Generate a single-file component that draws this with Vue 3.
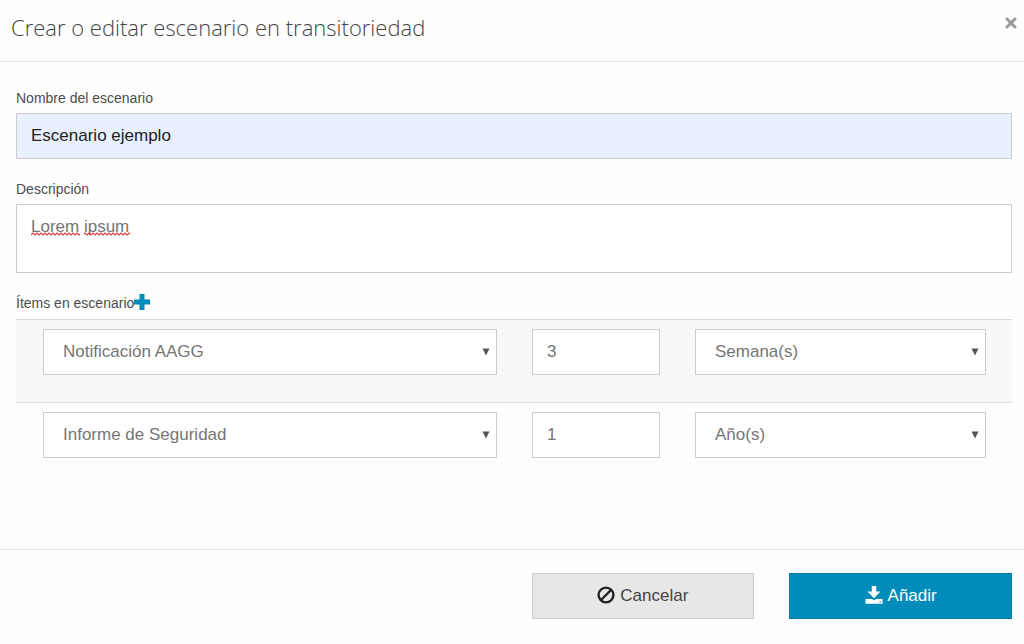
<template>
  <form class="modal" @submit.prevent>
    <header class="modal-header">
      <h1 class="modal-title">Crear o editar escenario en transitoriedad</h1>
      <button type="button" class="close" aria-label="Cerrar">
        <svg width="12" height="12" viewBox="0 0 12 12">
          <path d="M2 2L10 10M10 2L2 10" stroke="#999" stroke-width="3" stroke-linecap="round" />
        </svg>
      </button>
    </header>

    <div class="modal-body">
      <label class="label" for="nombre">Nombre del escenario</label>
      <input id="nombre" v-model="nombre" type="text" class="control control-filled" />

      <label class="label" for="descripcion">Descripción</label>
      <div class="textarea-wrap">
        <textarea id="descripcion" v-model="descripcion" class="control control-area" spellcheck="false"></textarea>
        <!-- subrayado del corrector -->
        <svg class="squiggle" width="101" height="4" viewBox="0 0 101 4">
          <defs>
            <pattern id="wave" width="4" height="4" patternUnits="userSpaceOnUse">
              <path d="M-1 2L0 3L2 1L4 3L5 2" fill="none" stroke="#e0383c" stroke-width="1.2" />
            </pattern>
          </defs>
          <rect width="49" height="4" fill="url(#wave)" />
          <rect x="53" width="46" height="4" fill="url(#wave)" />
        </svg>
      </div>

      <div class="items-head">
        <span>Ítems en escenario</span>
        <button type="button" class="add" aria-label="Añadir ítem" @click="addItem">
          <svg width="16" height="16" viewBox="0 0 16 16">
            <path d="M5.500 0h5v5.500H16v5h-5.500V16h-5v-5.500H0v-5h5.500z" fill="#008cba" />
          </svg>
        </button>
      </div>

      <div class="items">
        <div v-for="(item, i) in items" :key="i" class="item">
          <div class="select-wrap col-6">
            <select v-model="item.tipo" class="control" aria-label="Ítem">
              <option v-for="t in tipos" :key="t">{{ t }}</option>
            </select>
            <svg class="arrow" width="8" height="8" viewBox="0 0 8 8"><path d="M0.500 0.500h7L4 7.500z" fill="#555" /></svg>
          </div>
          <input v-model="item.cantidad" type="text" class="control col-2" aria-label="Cantidad" />
          <div class="select-wrap col-4">
            <select v-model="item.unidad" class="control" aria-label="Unidad">
              <option v-for="u in unidades" :key="u">{{ u }}</option>
            </select>
            <svg class="arrow" width="8" height="8" viewBox="0 0 8 8"><path d="M0.500 0.500h7L4 7.500z" fill="#555" /></svg>
          </div>
        </div>
      </div>
    </div>

    <footer class="modal-footer">
      <button type="button" class="btn btn-cancel">
        <svg width="18" height="18" viewBox="0 0 18 18">
          <circle cx="9" cy="9" r="7.400" fill="none" stroke="#222" stroke-width="2.400" />
          <path d="M4 14L14 4" stroke="#222" stroke-width="2.400" />
        </svg>
        <span>Cancelar</span>
      </button>
      <button type="submit" class="btn btn-primary">
        <svg width="18" height="18" viewBox="0 0 18 18">
          <path d="M6.800 0h4.400v5.500h4.300L9 12.200L2.500 5.500h4.300z" fill="#fff" />
          <path d="M0.500 13h6.500l2 1.200l2-1.200h6.500v4.800h-17z" fill="#fff" />
          <path d="M14.500 15.200h1.400v1.400h-1.400z" fill="#008cba" />
        </svg>
        <span>Añadir</span>
      </button>
    </footer>
  </form>
</template>

<script setup>
import { ref } from 'vue'

const nombre = ref('Escenario ejemplo')
const descripcion = ref('Lorem ipsum')

const tipos = ['Notificación AAGG', 'Informe de Seguridad']
const unidades = ['Semana(s)', 'Año(s)']

const items = ref([
  { tipo: 'Notificación AAGG', cantidad: '3', unidad: 'Semana(s)' },
  { tipo: 'Informe de Seguridad', cantidad: '1', unidad: 'Año(s)' }
])

function addItem() {
  items.value.push({ tipo: tipos[0], cantidad: '1', unidad: unidades[0] })
}
</script>

<style>
body { background: #fefefe; }
</style>

<style scoped>
* { box-sizing: border-box; }
.modal {
  font-family: "Liberation Sans", Arial, sans-serif;
  color: #4d4d4d;
}
.modal-header {
  display: flex; justify-content: space-between; align-items: flex-start;
  padding: 11px 7px 18px 11px;
  border-bottom: 1px solid #e5e5e5;
}
.modal-title {
  margin: 0;
  font-family: "Open Sans", sans-serif;
  font-size: 22px; font-weight: 300; line-height: 32px;
  color: #444;
}
.close, .add {
  display: block; padding: 0; border: none; background: none; cursor: pointer;
}
.close { margin-top: 6px; }
.close svg, .add svg { display: block; }
.modal-body { padding: 26px 12px 64px 16px; }
.label {
  display: block; margin-bottom: 5px;
  font-size: 14px; line-height: 20px;
}
.control {
  display: block; width: 100%; height: 46px; margin: 0;
  padding: 0 14px;
  border: 1px solid #ccc; border-radius: 0; outline: none;
  background: #fff; color: #757575;
  font-family: inherit; font-size: 17px; line-height: 24px;
  appearance: none;
}
.control:focus { border-color: #999; }
.control-filled { margin-bottom: 20px; background: #e8f0fe; color: #222; }
.control-area { height: 69px; padding-top: 10px; resize: none; }
.textarea-wrap { position: relative; margin-bottom: 20px; }
.squiggle { position: absolute; left: 15px; top: 28px; pointer-events: none; }
.items-head {
  display: flex; align-items: center;
  margin-bottom: 6px;
  font-size: 14px; line-height: 20px;
}
.add { margin-bottom: 2px; }
.item {
  display: grid; grid-template-columns: repeat(12, 1fr); column-gap: 35px;
  padding: 9px 26px 27px 27px;
  border-top: 1px solid #ddd;
}
.item:nth-child(odd) { background: #f8f8f8; }
.col-6 { grid-column: span 6; }
.col-4 { grid-column: span 4; }
.col-2 { grid-column: span 2; }
.select-wrap { position: relative; }
.select-wrap .control { padding-left: 19px; }
.arrow { position: absolute; right: 7px; top: 19px; pointer-events: none; }
.modal-footer {
  display: grid; grid-template-columns: repeat(4, 1fr); column-gap: 35px;
  padding: 23px 12px 25px 16px;
  border-top: 1px solid #e5e5e5;
}
.btn {
  display: flex; align-items: center; justify-content: center; gap: 5px;
  height: 46px; padding: 0 16px;
  border: 1px solid; border-radius: 0;
  font-family: inherit; font-size: 17px; cursor: pointer;
}
.btn svg { margin-bottom: 2px; }
.btn-cancel { grid-column: 3; background: #e7e7e7; border-color: #ccc; color: #444; }
.btn-primary { background: #008cba; border-color: #007ba4; color: #fff; }
</style>
